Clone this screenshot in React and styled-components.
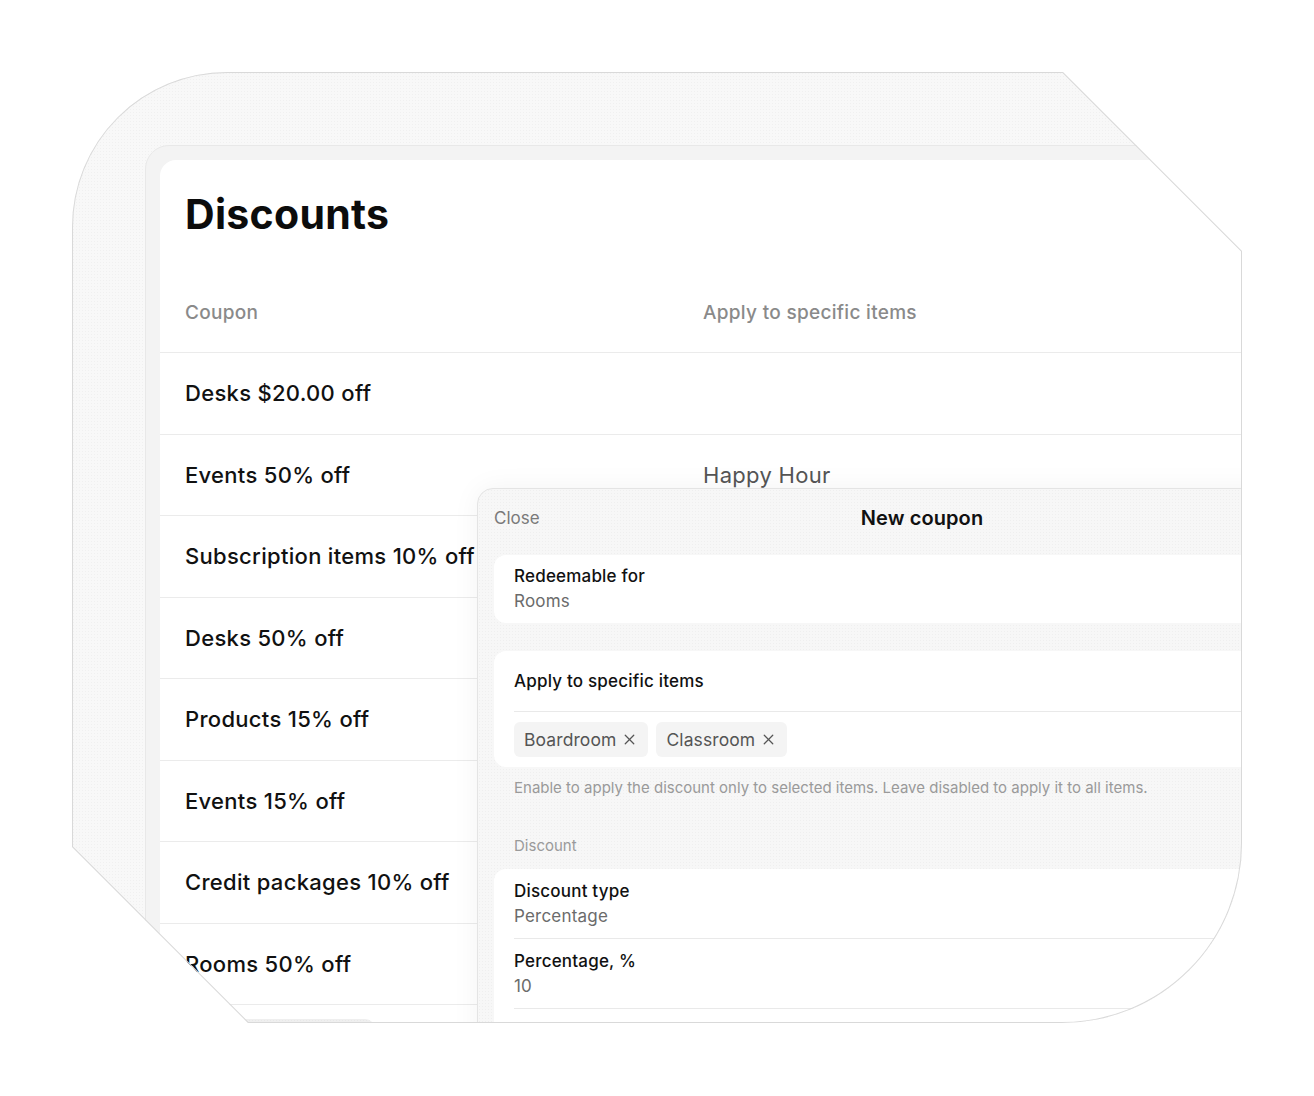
import React from "react";
import styled, { createGlobalStyle } from "styled-components";
import { X } from "lucide-react";

const SHAPE =
  "M 155 0 L 991 0 L 1170 179 L 1170 771 A 180 180 0 0 1 990 951 L 176 951 L 0 775 L 0 155 A 155 155 0 0 1 155 0 Z";

const coupons = [
  { name: "Desks $20.00 off", items: "" },
  { name: "Events 50% off", items: "Happy Hour" },
  { name: "Subscription items 10% off", items: "" },
  { name: "Desks 50% off", items: "" },
  { name: "Products 15% off", items: "" },
  { name: "Events 15% off", items: "" },
  { name: "Credit packages 10% off", items: "" },
  { name: "Rooms 50% off", items: "" },
];

function App() {
  return (
    <>
      <GlobalStyle />
      <Page>
        <Shot>
          <Frame>
            <Card>
              <Title>Discounts</Title>
              <Table>
                <HeadRow>
                  <HeadCell>Coupon</HeadCell>
                  <HeadCell>Apply to specific items</HeadCell>
                </HeadRow>
                {coupons.map((c) => (
                  <Row key={c.name}>
                    <Cell>{c.name}</Cell>
                    <Cell $muted>{c.items}</Cell>
                  </Row>
                ))}
              </Table>
              <MoreButton />

              <Modal>
                <ModalHeader>
                  <CloseLink>Close</CloseLink>
                  <ModalTitle>New coupon</ModalTitle>
                  <span />
                </ModalHeader>

                <Group>
                  <Field>
                    <Label>Redeemable for</Label>
                    <Value>Rooms</Value>
                  </Field>
                </Group>

                <Group $gap={28}>
                  <GroupTitle>Apply to specific items</GroupTitle>
                  <Chips>
                    <Chip>
                      Boardroom <X size={17} strokeWidth={1.8} />
                    </Chip>
                    <Chip>
                      Classroom <X size={17} strokeWidth={1.8} />
                    </Chip>
                  </Chips>
                </Group>
                <Hint>
                  Enable to apply the discount only to selected items. Leave disabled to apply it to all items.
                </Hint>

                <SectionLabel>Discount</SectionLabel>
                <Group $gap={13}>
                  <Field $divider>
                    <Label>Discount type</Label>
                    <Value>Percentage</Value>
                  </Field>
                  <Field $divider>
                    <Label>Percentage, %</Label>
                    <Value>10</Value>
                  </Field>
                  <Spacer />
                </Group>
              </Modal>
            </Card>
          </Frame>
          <Outline viewBox="0 0 1170 951">
            <path d={SHAPE} />
          </Outline>
        </Shot>
      </Page>
    </>
  );
}

const GlobalStyle = createGlobalStyle`
  body {
    margin: 0;
    background: #ffffff;
    font-family: Inter, "Noto Sans", "Liberation Sans", sans-serif;
    color: #111111;
  }
`;

const dots = `
  background-image: radial-gradient(circle, rgba(0, 0, 0, 0.03) 0.7px, transparent 0.9px);
  background-size: 3px 3px;
`;

const Page = styled.div`
  width: 1314px;
  height: 1096px;
  box-sizing: border-box;
  padding: 72px 0 0 72px;
  overflow: hidden;
`;

const Shot = styled.div`
  position: relative;
  width: 1170px;
  height: 951px;
  box-sizing: border-box;
  padding: 73px 0 0 73px;
  overflow: hidden;
  clip-path: path("${SHAPE}");
  background-color: #f8f8f8;
  ${dots}
`;

const Outline = styled.svg`
  position: absolute;
  inset: 0;
  width: 1170px;
  height: 951px;
  pointer-events: none;

  path {
    fill: none;
    stroke: #d9d9d9;
    stroke-width: 2;
  }
`;

const Frame = styled.div`
  width: 1200px;
  height: 1000px;
  box-sizing: border-box;
  padding: 14px;
  background: #f3f3f3;
  border: 1px solid #e8e8e8;
  border-radius: 24px;
`;

const Card = styled.div`
  position: relative;
  height: 100%;
  box-sizing: border-box;
  padding-top: 29px;
  background: #ffffff;
  border-radius: 16px;
`;

const Title = styled.h1`
  margin: 0;
  padding-left: 25px;
  font-size: 41px;
  line-height: 50px;
  font-weight: 700;
  letter-spacing: 0.3px;
  color: #0c0c0c;
`;

const Table = styled.div`
  margin-top: 33px;
  border-bottom: 1px solid #ebebeb;
`;

const HeadRow = styled.div`
  display: grid;
  grid-template-columns: 518px 1fr;
  align-items: center;
  height: 80px;
  padding-left: 25px;
`;

const HeadCell = styled.div`
  font-size: 19px;
  font-weight: 500;
  letter-spacing: 0.3px;
  color: #8a8a8a;
`;

const Row = styled.div`
  display: grid;
  grid-template-columns: 518px 1fr;
  align-items: center;
  height: 81.5px;
  box-sizing: border-box;
  padding-left: 25px;
  border-top: 1px solid #ebebeb;
`;

const Cell = styled.div`
  font-size: 22px;
  letter-spacing: 0.3px;
  font-weight: ${(p) => (p.$muted ? 400 : 500)};
  color: ${(p) => (p.$muted ? "#555555" : "#111111")};
  white-space: nowrap;
`;

const MoreButton = styled.div`
  width: 190px;
  height: 40px;
  margin: 14px 0 0 25px;
  border-radius: 10px;
  background-color: #efefef;
  ${dots}
`;

const Modal = styled.div`
  position: absolute;
  left: 317px;
  top: 328px;
  width: 890px;
  height: 720px;
  box-sizing: border-box;
  padding: 0 16px;
  background-color: #f7f7f7;
  ${dots}
  border: 1px solid #e4e4e4;
  border-radius: 16px;
  box-shadow: 0 0 28px rgba(0, 0, 0, 0.05);
`;

const ModalHeader = styled.div`
  display: grid;
  grid-template-columns: 1fr auto 1fr;
  align-items: center;
  height: 57px;
  margin-bottom: 9px;
`;

const CloseLink = styled.span`
  font-size: 17px;
  color: #7a7a7a;
`;

const ModalTitle = styled.span`
  font-size: 20px;
  font-weight: 600;
  letter-spacing: 0.1px;
  color: #111111;
`;

const Group = styled.div`
  margin-top: ${(p) => p.$gap || 0}px;
  background: #ffffff;
  border-radius: 12px;
  overflow: hidden;
`;

const Field = styled.div`
  margin-left: 20px;
  padding: ${(p) => (p.$divider ? "11px 0 10px" : "10px 0")};
  border-bottom: ${(p) => (p.$divider ? "1px solid #e9e9e9" : "none")};
`;

const Spacer = styled.div`
  height: 60px;
`;

const Label = styled.div`
  font-size: 17px;
  line-height: 22px;
  font-weight: 500;
  letter-spacing: 0.2px;
  color: #111111;
`;

const Value = styled.div`
  margin-top: 2px;
  font-size: 17px;
  line-height: 24px;
  letter-spacing: 0.2px;
  color: #6b6b6b;
`;

const GroupTitle = styled.div`
  display: flex;
  align-items: center;
  height: 60px;
  margin-left: 20px;
  border-bottom: 1px solid #e9e9e9;
  font-size: 17px;
  font-weight: 500;
  letter-spacing: 0.2px;
`;

const Chips = styled.div`
  display: flex;
  gap: 8px;
  padding: 10px 20px;
`;

const Chip = styled.div`
  display: flex;
  align-items: center;
  gap: 5px;
  height: 35px;
  padding: 0 10px;
  border-radius: 6px;
  background: #f4f4f4;
  font-size: 17.5px;
  letter-spacing: 0.1px;
  color: #555555;
`;

const Hint = styled.div`
  margin-top: 11px;
  padding-left: 20px;
  font-size: 15px;
  line-height: 20px;
  color: #9a9a9a;
`;

const SectionLabel = styled.div`
  margin-top: 38px;
  padding-left: 20px;
  font-size: 15px;
  line-height: 20px;
  color: #9a9a9a;
`;

export default App;
